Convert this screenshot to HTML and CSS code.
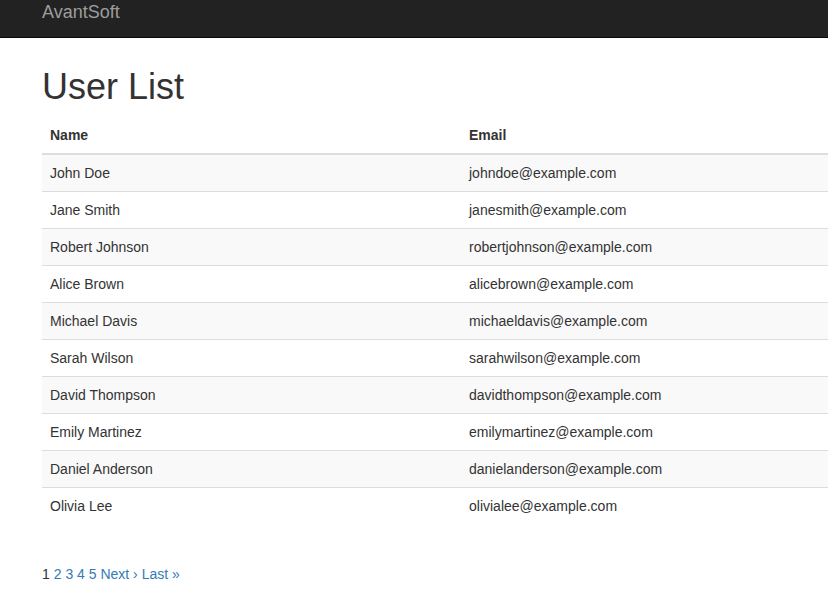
FILE: index.html
```html
<!DOCTYPE html>
<html lang="en">
<head>
<meta charset="utf-8">
<title>User List</title>
<link rel="stylesheet" href="styles.css">
</head>
<body>
<nav class="navbar">
  <a class="brand" href="#">AvantSoft</a>
</nav>
<main class="content">
  <h1 class="title">User List</h1>
  <table class="users">
    <thead>
      <tr><th class="col-name">Name</th><th>Email</th></tr>
    </thead>
    <tbody>
      <tr><td>John Doe</td><td>johndoe@example.com</td></tr>
      <tr><td>Jane Smith</td><td>janesmith@example.com</td></tr>
      <tr><td>Robert Johnson</td><td>robertjohnson@example.com</td></tr>
      <tr><td>Alice Brown</td><td>alicebrown@example.com</td></tr>
      <tr><td>Michael Davis</td><td>michaeldavis@example.com</td></tr>
      <tr><td>Sarah Wilson</td><td>sarahwilson@example.com</td></tr>
      <tr><td>David Thompson</td><td>davidthompson@example.com</td></tr>
      <tr><td>Emily Martinez</td><td>emilymartinez@example.com</td></tr>
      <tr><td>Daniel Anderson</td><td>danielanderson@example.com</td></tr>
      <tr><td>Olivia Lee</td><td>olivialee@example.com</td></tr>
    </tbody>
  </table>
  <div class="pager">
    <span class="current">1</span>
    <a href="#">2</a>
    <a href="#">3</a>
    <a href="#">4</a>
    <a href="#">5</a>
    <a href="#">Next ›</a>
    <a href="#">Last »</a>
  </div>
</main>
</body>
</html>
```
FILE: styles.css
```css
html, body {
  margin: 0;
  padding: 0;
}
body {
  font-family: "Liberation Sans", Arial, sans-serif;
  font-size: 14px;
  line-height: 20px;
  color: #333;
  background: #fff;
  overflow: hidden;
}
.navbar {
  height: 38px;
  box-sizing: border-box;
  background: #222;
  border-bottom: 1px solid #080808;
  padding-left: 42px;
}
.brand {
  display: inline-block;
  padding-top: 2px;
  font-size: 18px;
  line-height: 20px;
  color: #9d9d9d;
  text-decoration: none;
}
.content {
  padding-left: 42px;
}
.title {
  margin: 29px 0 10px;
  font-size: 36px;
  font-weight: 500;
  line-height: 40px;
  color: #333;
}
.users {
  width: 100%;
  border-collapse: collapse;
  border-spacing: 0;
}
.users th,
.users td {
  padding: 8px;
  line-height: 20px;
  text-align: left;
  vertical-align: top;
}
.users th {
  font-weight: bold;
  border-bottom: 2px solid #ddd;
  vertical-align: bottom;
}
.users .col-name {
  width: 403px;
}
.users td {
  border-top: 1px solid #ddd;
}
.users tbody tr:first-child td {
  border-top: 0;
}
.users tbody tr:nth-child(odd) {
  background: #f9f9f9;
}
.pager {
  margin-top: 40px;
  line-height: 20px;
}
.current {
  color: #333;
}
.pager a {
  color: #337ab7;
  text-decoration: none;
}
```
